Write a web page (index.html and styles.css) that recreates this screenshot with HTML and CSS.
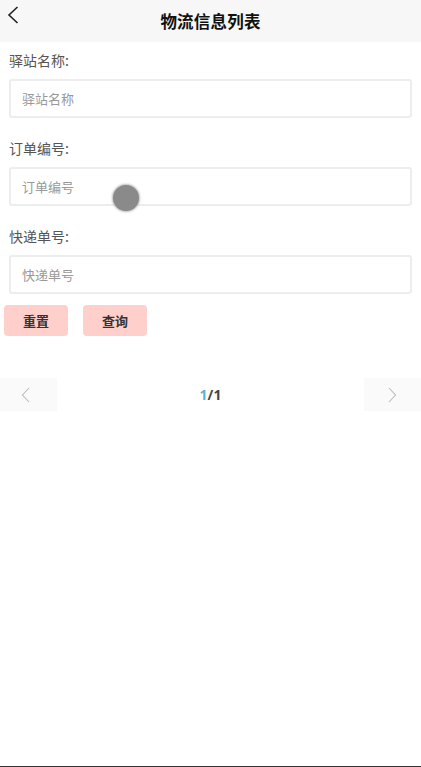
FILE: index.html
```html
<!DOCTYPE html>
<html lang="zh">
<head>
<meta charset="utf-8">
<title>物流信息列表</title>
<link rel="stylesheet" href="styles.css">
</head>
<body>
<div class="page">
  <header class="topbar">
    <span class="back">
      <svg width="12" height="18" viewBox="0 0 12 18"><path d="M10.5 1 L2 9 L10.5 17" fill="none" stroke="#222" stroke-width="1.6"/></svg>
    </span>
    <h1 class="title">物流信息列表</h1>
  </header>
  <form class="form">
    <div class="field">
      <label class="label">驿站名称:</label>
      <input class="input" type="text" placeholder="驿站名称">
    </div>
    <div class="field">
      <label class="label">订单编号:</label>
      <input class="input" type="text" placeholder="订单编号">
    </div>
    <div class="field">
      <label class="label">快递单号:</label>
      <input class="input" type="text" placeholder="快递单号">
    </div>
  </form>
  <div class="actions">
    <button class="btn" type="button">重置</button>
    <button class="btn" type="button">查询</button>
  </div>
  <nav class="pager">
    <span class="pbtn">
      <svg width="9" height="16" viewBox="0 0 9 16"><path d="M8 1 L1.5 8 L8 15" fill="none" stroke="#bbb" stroke-width="1.1"/></svg>
    </span>
    <span class="pnum"><span class="cur">1</span>/1</span>
    <span class="pbtn">
      <svg width="9" height="16" viewBox="0 0 9 16"><path d="M1 1 L7.5 8 L1 15" fill="none" stroke="#bbb" stroke-width="1.1"/></svg>
    </span>
  </nav>
  <div class="spacer"></div>
  <div class="bottomline"></div>
  <div class="touch"></div>
</div>
</body>
</html>
```
FILE: styles.css
```css
* { box-sizing: border-box; }
html, body { margin: 0; padding: 0; background: #fff; }
body { font-family: "Noto Sans CJK SC", "Noto Sans", sans-serif; color: #333; }
.page { position: relative; min-height: 767px; display: flex; flex-direction: column; }
.topbar { height: 42px; background: #f7f7f7; display: flex; align-items: center; justify-content: center; position: relative; }
.back { position: absolute; left: 7px; top: 6px; display: flex; }
.title { margin: 0; font-size: 16.5px; font-weight: 700; color: #111; line-height: 42px; letter-spacing: 0.2px; }
.form { padding: 6px 9px 0 9px; display: flex; flex-direction: column; gap: 18px; }
.field { display: flex; flex-direction: column; gap: 7px; }
.label { font-size: 14px; line-height: 24px; height: 24px; color: #555; }
.input { height: 39px; border: 2px solid #ededed; border-radius: 3px; padding: 0 11px; font-size: 13px; font-family: inherit; color: #333; outline: none; background: #fff; width: 100%; margin: 0; }
.input::placeholder { color: #999; }
.actions { display: flex; gap: 15px; padding: 11px 0 0 4px; }
.btn { width: 64px; height: 31px; background: #ffd0cb; border: none; border-radius: 4px; font-family: inherit; font-size: 13px; font-weight: 700; color: #333; padding: 0; margin: 0; }
.pager { margin-top: 42px; height: 33px; display: flex; align-items: center; justify-content: space-between; }
.pbtn { width: 57px; height: 33px; background: #fafafa; display: flex; align-items: center; justify-content: center; }
.pbtn:first-child { padding-right: 6px; }
.pnum { font-size: 14px; font-weight: 700; color: #444; font-family: "Open Sans", "Noto Sans", sans-serif; }
.cur { color: #5bb5d0; }
.spacer { flex: 1; }
.bottomline { height: 1px; background: #333; }
.touch { position: absolute; left: 113px; top: 185px; width: 26px; height: 26px; border-radius: 50%; background: #8a8a8a; box-shadow: 0 0 2px 1px rgba(140,140,140,0.6); }
```
